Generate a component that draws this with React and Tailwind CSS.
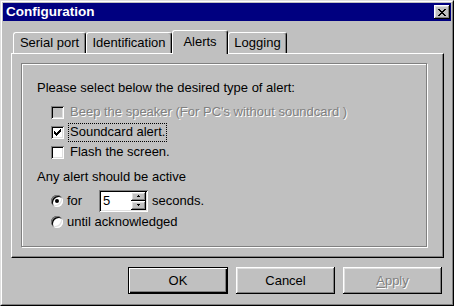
import React from 'react';

// classic 3d frames
const raised = 'shadow-[inset_-1px_-1px_#000,inset_1px_1px_#fff,inset_-2px_-2px_#808080,inset_2px_2px_#dfdfdf]';
const sunken = 'shadow-[inset_1px_1px_#808080,inset_-1px_-1px_#fff,inset_2px_2px_#000,inset_-2px_-2px_#dfdfdf]';

function CloseGlyph() {
  const rows = [
    [0, 1, 6, 7],
    [1, 2, 5, 6],
    [2, 3, 4, 5],
    [3, 4],
    [2, 3, 4, 5],
    [1, 2, 5, 6],
    [0, 1, 6, 7],
  ];
  return (
    <svg width="8" height="7" shapeRendering="crispEdges">
      {rows.map((r, y) => r.map((x) => <rect key={y + '-' + x} x={x} y={y} width="1" height="1" fill="#000" />))}
    </svg>
  );
}

function CheckGlyph() {
  const tops = [2, 3, 4, 3, 2, 1, 0];
  return (
    <svg width="7" height="7" shapeRendering="crispEdges">
      {tops.map((t, i) => <rect key={i} x={i} y={t} width="1" height="3" fill="#000" />)}
    </svg>
  );
}

function Arrow({ up }) {
  return (
    <svg width="3" height="2" shapeRendering="crispEdges">
      {up ? (
        <>
          <rect x="1" y="0" width="1" height="1" fill="#000" />
          <rect x="0" y="1" width="3" height="1" fill="#000" />
        </>
      ) : (
        <>
          <rect x="0" y="0" width="3" height="1" fill="#000" />
          <rect x="1" y="1" width="1" height="1" fill="#000" />
        </>
      )}
    </svg>
  );
}

function CheckBox({ checked, disabled }) {
  return (
    <div className={`w-[13px] h-[13px] shrink-0 flex items-center justify-center ${sunken} ${disabled ? 'bg-[#c0c0c0]' : 'bg-white'}`}>
      {checked && <CheckGlyph />}
    </div>
  );
}

function Radio({ checked }) {
  return (
    <div className={`w-[12px] h-[12px] shrink-0 rounded-full bg-white flex items-center justify-center ${sunken}`}>
      {checked && <div className="w-[4px] h-[4px] rounded-full bg-black" />}
    </div>
  );
}

function CheckRow({ label, checked, disabled, focus }) {
  return (
    <div className="h-[20px] flex items-center">
      <CheckBox checked={checked} disabled={disabled} />
      {focus ? (
        <div className="ml-[4px] h-[19px] px-[1px] flex items-center border border-dotted border-black">{label}</div>
      ) : (
        <div className={`ml-[6px] ${disabled ? 'text-[#808080] [text-shadow:1px_1px_0_#fff]' : ''}`}>{label}</div>
      )}
    </div>
  );
}

function Tab({ label, selected, className }) {
  if (selected) {
    return (
      <div className={`${className} h-[24px] -mb-[1px] pb-[1px] bg-[#c0c0c0] flex items-center justify-center border-t border-l border-white border-r border-r-black rounded-t-[3px] shadow-[inset_-1px_0_#808080]`}>
        {label}
      </div>
    );
  }
  return (
    <div className={`${className} h-[21px] flex items-center justify-center border-t border-l border-white border-r border-r-black rounded-t-[3px] shadow-[inset_-1px_0_#808080]`}>
      {label}
    </div>
  );
}

function Button({ children, isDefault, disabled }) {
  const frame = isDefault
    ? 'border border-black shadow-[inset_1px_1px_#fff,inset_-1px_-1px_#000,inset_-2px_-2px_#808080]'
    : raised;
  return (
    <div className={`h-[27px] flex items-center justify-center ${frame} ${disabled ? 'text-[#808080] [text-shadow:1px_1px_0_#fff]' : ''} ${isDefault ? 'w-[100px]' : 'w-[99px]'}`}>
      {children}
    </div>
  );
}

export default function App() {
  return (
    <div className="w-[454px] h-[306px] bg-[#c0c0c0] text-black text-[13px] [font-family:'Liberation_Sans',Arial,sans-serif] border border-t-[#dfdfdf] border-l-[#dfdfdf] border-r-black border-b-black overflow-hidden">
      <div className="h-full p-[1px] flex flex-col border border-t-white border-l-white border-r-[#808080] border-b-[#808080]">
        {/* title bar */}
        <div className="h-[18px] shrink-0 bg-[#000080] flex items-center justify-between pl-[3px] pr-[1px]">
          <span className="text-white font-bold text-[13.5px] leading-none">Configuration</span>
          <div className={`w-[16px] h-[14px] bg-[#c0c0c0] flex items-center justify-center ${raised}`}>
            <CloseGlyph />
          </div>
        </div>

        <div className="mt-[9px] ml-[8px] mr-[7px] flex flex-col">
          <div className="relative z-10 h-[23px] flex items-end pl-[2px]">
            <Tab label="Serial port" className="w-[73px]" />
            <Tab label="Identification" className="w-[86px]" />
            <Tab label="Alerts" selected className="w-[56px]" />
            <Tab label="Logging" className="w-[59px]" />
          </div>

          <div className="h-[205px] pt-[9px] pl-[9px] border border-t-white border-l-white border-r-black border-b-black shadow-[inset_-1px_-1px_#808080]">
            <div className="w-[406px] h-[184px] pl-[15px] flex flex-col border border-[#808080] shadow-[inset_1px_1px_#fff,1px_1px_#fff]">
              <div className="mt-[16px] h-[15px] leading-[15px]">Please select below the desired type of alert:</div>

              <div className="mt-[7px] pl-[14px] flex flex-col">
                <CheckRow disabled label="Beep the speaker (For PC's without soundcard )" />
                <CheckRow checked focus label="Soundcard alert." />
                <CheckRow label="Flash the screen." />
              </div>

              <div className="mt-[5px] h-[20px] flex items-center">Any alert should be active</div>

              <div className="mt-[2px] pl-[14px] h-[23px] flex items-center">
                <Radio checked />
                <span className="ml-[4px] w-[32px]">for</span>
                <div className={`w-[49px] h-[22px] p-[2px] bg-white flex ${sunken}`}>
                  <div className="flex-1 pl-[2px] flex items-center">5</div>
                  <div className="w-[15px] flex flex-col">
                    <div className={`flex-1 bg-[#c0c0c0] flex items-center justify-center ${raised}`}>
                      <Arrow up />
                    </div>
                    <div className={`flex-1 bg-[#c0c0c0] flex items-center justify-center ${raised}`}>
                      <Arrow />
                    </div>
                  </div>
                </div>
                <span className="ml-[4px]">seconds.</span>
              </div>

              <div className="pl-[14px] h-[20px] flex items-center">
                <Radio />
                <span className="ml-[4px]">until acknowledged</span>
              </div>
            </div>
          </div>
        </div>

        <div className="mt-[9px] pr-[9px] flex justify-end gap-[8px]">
          <Button isDefault>OK</Button>
          <Button>Cancel</Button>
          <Button disabled>
            <span className="underline underline-offset-2">A</span>pply
          </Button>
        </div>
      </div>
    </div>
  );
}
